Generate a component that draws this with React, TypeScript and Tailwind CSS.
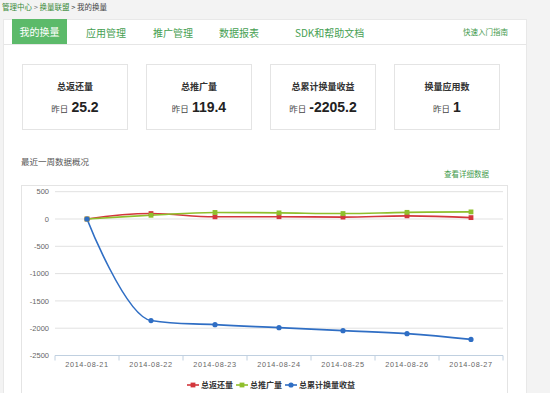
import React from "react";

type Series = { name: string; color: string; marker: "square" | "circle"; data: number[] };

const dates = ["2014-08-21", "2014-08-22", "2014-08-23", "2014-08-24", "2014-08-25", "2014-08-26", "2014-08-27"];

const series: Series[] = [
    { name: "总返还量", color: "#d3363c", marker: "square", data: [0, 100, 40, 42, 35, 58, 25.2] },
    { name: "总推广量", color: "#8fbf2c", marker: "square", data: [0, 68, 120, 112, 100, 122, 130] },
    { name: "总累计换量收益", color: "#2f6ec4", marker: "circle", data: [0, -1860, -1935, -1990, -2045, -2100, -2205.2] },
];

const PLOT_LEFT = 33;
const PLOT_RIGHT = 481;
const CAT_W = 64;
const Y_ZERO = 33;
const PX_PER_UNIT = 27.3 / 500;

const xOf = (i: number) => PLOT_LEFT + CAT_W * i + CAT_W / 2;
const yOf = (v: number) => Y_ZERO - v * PX_PER_UNIT;

// highcharts-style spline
const splinePath = (data: number[]) => {
    const pts = data.map((v, i) => ({ x: xOf(i), y: yOf(v) }));
    const sm = 1.5;
    const den = sm + 1;
    const ctrl = pts.map((p, i) => {
        if (i === 0 || i === pts.length - 1) return { lx: p.x, ly: p.y, rx: p.x, ry: p.y };
        const last = pts[i - 1];
        const next = pts[i + 1];
        const lx = (sm * p.x + last.x) / den;
        let ly = (sm * p.y + last.y) / den;
        const rx = (sm * p.x + next.x) / den;
        let ry = (sm * p.y + next.y) / den;
        const corr = ((ry - ly) * (rx - p.x)) / (rx - lx) + p.y - ry;
        ly += corr;
        ry += corr;
        if (ly > last.y && ly > p.y) { ly = Math.max(last.y, p.y); ry = 2 * p.y - ly; }
        else if (ly < last.y && ly < p.y) { ly = Math.min(last.y, p.y); ry = 2 * p.y - ly; }
        if (ry > next.y && ry > p.y) { ry = Math.max(next.y, p.y); ly = 2 * p.y - ry; }
        else if (ry < next.y && ry < p.y) { ry = Math.min(next.y, p.y); ly = 2 * p.y - ry; }
        return { lx, ly, rx, ry };
    });
    let d = `M${pts[0].x},${pts[0].y}`;
    for (let i = 1; i < pts.length; i++) {
        d += ` C${ctrl[i - 1].rx},${ctrl[i - 1].ry} ${ctrl[i].lx},${ctrl[i].ly} ${pts[i].x},${pts[i].y}`;
    }
    return d;
};

const Marker: React.FC<{ x: number; y: number; s: Series }> = ({ x, y, s }) =>
    s.marker === "circle"
        ? <circle cx={x} cy={y} r={2.6} fill={s.color} />
        : <rect x={x - 2.4} y={y - 2.4} width={4.8} height={4.8} fill={s.color} />;

const legendPos = [
    { sx: 171, tx: 179 },
    { sx: 220, tx: 228 },
    { sx: 269, tx: 277 },
];

const Chart: React.FC = () => {
    const ticks = [500, 0, -500, -1000, -1500, -2000];
    const axisY = yOf(-2500);
    return (
        <svg width="485" height="215" className="block">
            {ticks.map((t) => (
                <line key={t} x1={PLOT_LEFT} x2={PLOT_RIGHT} y1={yOf(t)} y2={yOf(t)} stroke="#e1e1e1" strokeWidth="1" />
            ))}
            {[...ticks, -2500].map((t) => (
                <text key={t} x={27} y={yOf(t) + 2.6} textAnchor="end" fontSize="7.5" fill="#666" fontFamily="Liberation Sans, sans-serif">{t}</text>
            ))}
            <line x1={PLOT_LEFT} x2={PLOT_RIGHT} y1={axisY} y2={axisY} stroke="#c0d0e0" strokeWidth="1" />
            {Array.from({ length: 8 }).map((_, k) => (
                <line key={k} x1={PLOT_LEFT + CAT_W * k} x2={PLOT_LEFT + CAT_W * k} y1={axisY} y2={axisY + 5} stroke="#c0d0e0" strokeWidth="1" />
            ))}
            {dates.map((d, i) => (
                <text key={d} x={xOf(i)} y={axisY + 11} textAnchor="middle" fontSize="7.3" letterSpacing="0.6" fill="#666" fontFamily="Liberation Sans, sans-serif">{d}</text>
            ))}
            {series.map((s) => (
                <path key={s.name} d={splinePath(s.data)} fill="none" stroke={s.color} strokeWidth="1.6" />
            ))}
            {series.map((s) => s.data.map((v, i) => <Marker key={s.name + i} x={xOf(i)} y={yOf(v)} s={s} />))}
            {series.map((s, i) => (
                <g key={s.name}>
                    <line x1={legendPos[i].sx - 6} x2={legendPos[i].sx + 6} y1={199} y2={199} stroke={s.color} strokeWidth="1.6" />
                    <Marker x={legendPos[i].sx} y={199} s={s} />
                    <text x={legendPos[i].tx} y={202} fontSize="8" fontWeight="bold" fill="#333" fontFamily="Noto Sans CJK SC, sans-serif">{s.name}</text>
                </g>
            ))}
        </svg>
    );
};

const StatCard: React.FC<{ title: string; value: string }> = ({ title, value }) => (
    <div className="w-[106px] h-[66px] border border-[#e4e4e4] flex flex-col items-center pt-[17px]">
        <div className="text-[9px] font-bold text-[#333] leading-none">{title}</div>
        <div className="mt-[9px] flex items-baseline leading-none">
            <span className="text-[8.5px] text-[#444] mr-[3px]">昨日</span>
            <span className="text-[14px] font-bold text-[#222] font-['Liberation_Sans',sans-serif]">{value}</span>
        </div>
    </div>
);

const tabs = [
    { label: "应用管理", ml: "ml-[19px]" },
    { label: "推广管理", ml: "ml-[27px]" },
    { label: "数据报表", ml: "ml-[26px]" },
    { label: "SDK和帮助文档", ml: "ml-[36px]" },
];

const App: React.FC = () => {
    return (
        <div className="w-[550px] h-[393px] overflow-hidden bg-[#f3f3f3] font-['Noto_Sans_CJK_SC','Liberation_Sans',sans-serif]">
            <div className="h-[19px] pl-[2px] pt-[3px] text-[7.5px] leading-none text-[#444] whitespace-nowrap">
                <span className="text-[#3a8a3a]">管理中心</span>
                <span className="text-[#777]"> &gt; </span>
                <span className="text-[#3a8a3a]">换量联盟</span>
                <span> &gt; 我的换量</span>
            </div>
            <div className="ml-[3px] w-[524px] h-[380px] bg-white border border-[#e8e8e8]">
                <div className="h-[25px] flex items-stretch border-b border-[#e6e6e6]">
                    <div className="ml-[8px] w-[55px] -mt-[1px] bg-[#5cba6a] text-white text-[10px] flex items-center justify-center">我的换量</div>
                    {tabs.map((t) => (
                        <div key={t.label} className={`${t.ml} flex items-center text-[10px] text-[#46a052] whitespace-nowrap`}>{t.label}</div>
                    ))}
                    <div className="ml-auto mr-[18px] flex items-center text-[7.5px] text-[#3f9a4c]">快速入门指南</div>
                </div>
                <div className="mt-[19px] ml-[18px] flex gap-[18px]">
                    <StatCard title="总返还量" value="25.2" />
                    <StatCard title="总推广量" value="119.4" />
                    <StatCard title="总累计换量收益" value="-2205.2" />
                    <StatCard title="换量应用数" value="1" />
                </div>
                <div className="mt-[27px] ml-[17px] h-[10px] text-[8.5px] leading-none text-[#555]">最近一周数据概况</div>
                <div className="mt-[3px] w-[485px] h-[9px] text-right text-[7.5px] leading-none text-[#3f9a4c]">查看详细数据</div>
                <div className="mt-[6px] ml-[17px] w-[487px] h-[220px] border border-[#e4e4e4]">
                    <Chart />
                </div>
            </div>
        </div>
    );
};

export default App;
